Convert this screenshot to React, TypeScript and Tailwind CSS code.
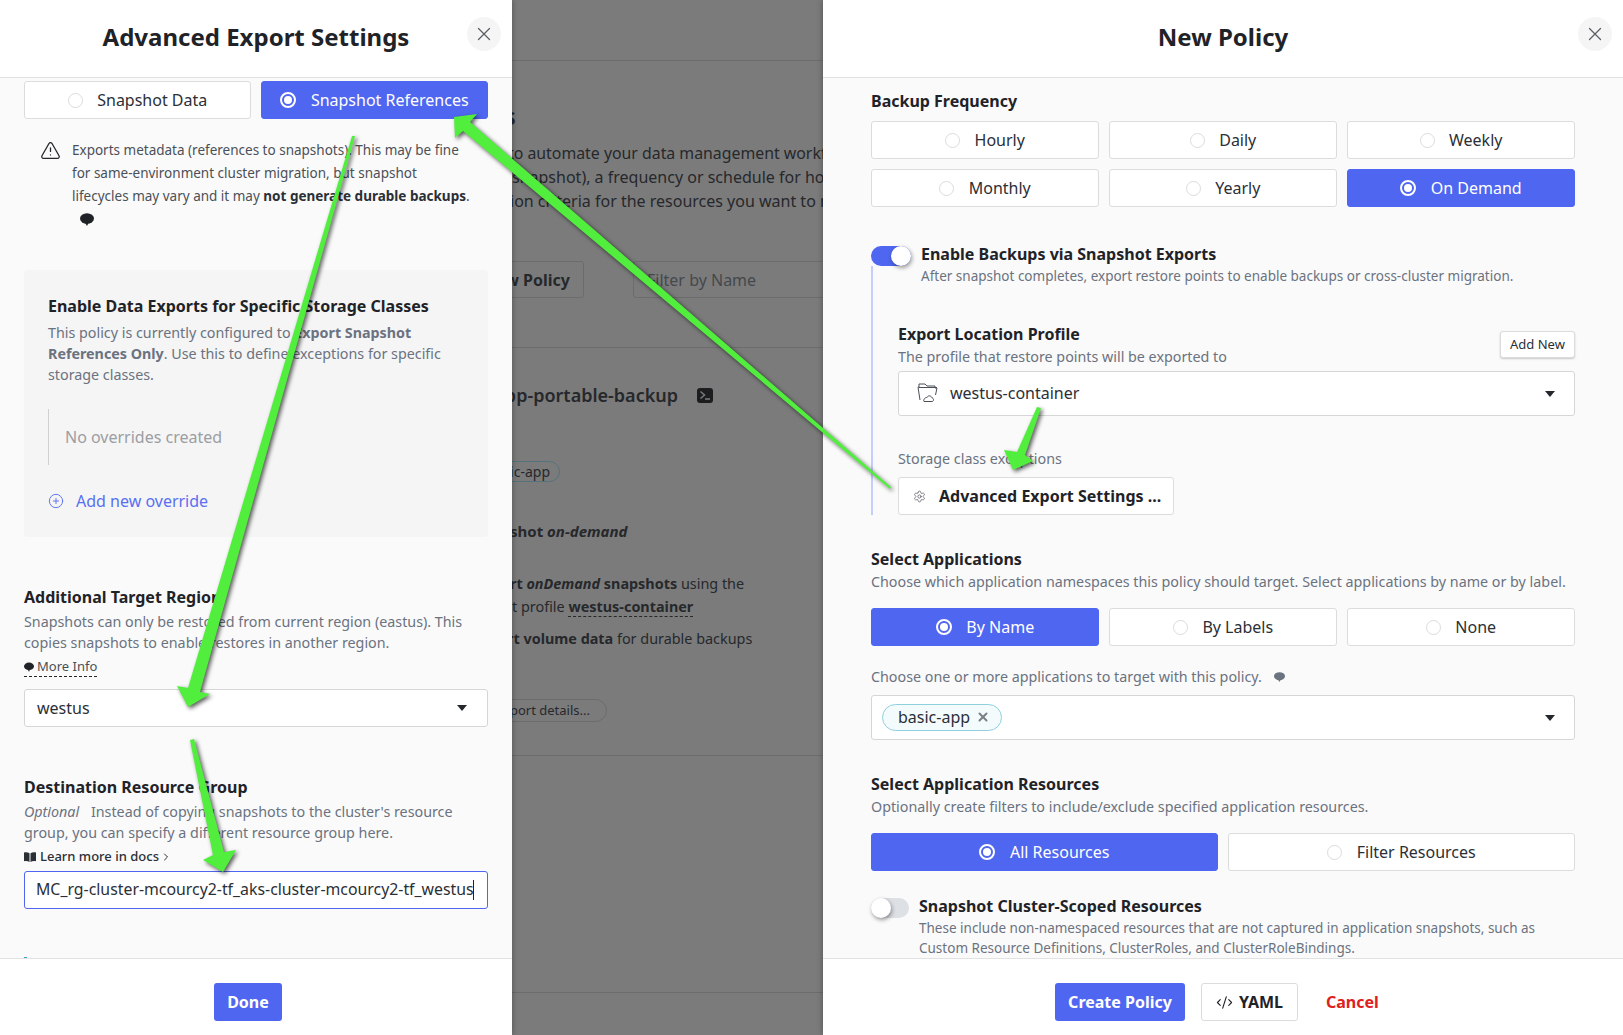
import { ChevronRight, CirclePlus, CodeXml, Settings, TriangleAlert, X } from 'lucide-react';

const Radio = ({ label, active }: { label: string; active?: boolean }) => (
  <div
    className={
      active
        ? 'flex h-[38px] items-center justify-center gap-[14.5px] rounded-[3px] border border-[#4f66f0] bg-[#4f66f0] text-[16px] text-white'
        : 'flex h-[38px] items-center justify-center gap-[14.5px] rounded-[3px] border border-[#dcdcdc] bg-white text-[16px] text-[#2b2f36]'
    }
  >
    {active ? (
      <span className="flex h-4 w-4 items-center justify-center rounded-full border-2 border-white bg-[#4f66f0]">
        <span className="h-2 w-2 rounded-full bg-white" />
      </span>
    ) : (
      <span className="h-[15px] w-[15px] rounded-full border border-[#dcdcdc] bg-white" />
    )}
    <span>{label}</span>
  </div>
);

const Bubble = ({ className }: { className: string }) => (
  <svg viewBox="0 0 14 13" className={className} fill="currentColor">
    <ellipse cx="7" cy="5.5" rx="7" ry="5.2" />
    <path d="M4.5 9 L7 13 L9 9 Z" />
  </svg>
);

const Caret = () => (
  <svg viewBox="0 0 10 6" className="h-[6px] w-[10px]" fill="#24272c">
    <path d="M0 0 H10 L5 6 Z" />
  </svg>
);

const CloseButton = () => (
  <div className="flex h-[34px] w-[34px] items-center justify-center justify-self-end rounded-full bg-[#f5f5f5] text-[#5b6068]">
    <X size={22} strokeWidth={1.4} />
  </div>
);

const PanelHeader = ({ title }: { title: string }) => (
  <div className="grid h-[78px] shrink-0 grid-cols-[1fr_auto_1fr] border-b border-[#e2e2e2] bg-white px-[11px] pt-[17px]">
    <div />
    <h1 className="pt-[3px] text-[24px] leading-[34px] font-bold text-[#1f2328]">{title}</h1>
    <CloseButton />
  </div>
);

export default function App() {
  return (
    <div className="relative flex h-[1035px] w-[1623px] overflow-hidden bg-[#7b7b7b] font-['Noto_Sans',sans-serif]">
      {/* Advanced export drawer */}
      <div className="z-10 flex h-full w-[512px] shrink-0 flex-col bg-[#fafafa] shadow-[0_0_6px_rgba(0,0,0,0.35)]">
        <PanelHeader title="Advanced Export Settings" />
        <div className="flex-1 overflow-hidden px-6 pt-[3px]">
          <div className="grid grid-cols-2 gap-[10px]">
            <Radio label="Snapshot Data" />
            <Radio label="Snapshot References" active />
          </div>

          <div className="mt-5 flex pl-4 text-[13.5px] leading-[23px] text-[#4b5058]">
            <TriangleAlert size={21} strokeWidth={1.5} className="mt-px w-[32px] shrink-0 pr-[11px] text-[#24272c]" />
            <div>
              <p className="whitespace-nowrap">Exports metadata (references to snapshots). This may be fine</p>
              <p className="whitespace-nowrap">for same-environment cluster migration, but snapshot</p>
              <p className="whitespace-nowrap">
                lifecycles may vary and it may <b className="font-bold text-[#2b2f36]">not generate durable backups</b>.
              </p>
              <div className="flex h-[23px] items-center pl-2 text-[#1f2328]">
                <Bubble className="h-[13px] w-[14px]" />
              </div>
            </div>
          </div>

          <div className="mt-[39px] h-[267px] rounded-[4px] bg-[#f5f5f5] px-6 pt-6">
            <h2 className="text-[16px] leading-6 font-bold text-[#1f2328]">Enable Data Exports for Specific Storage Classes</h2>
            <p className="mt-1 text-[14.3px] leading-[21px] text-[#6b7280]">
              This policy is currently configured to <b className="font-bold">Export Snapshot References Only</b>. Use this to define exceptions for specific storage classes.
            </p>
            <div className="mt-6 flex h-[56px] items-center border-l border-[#d0d0d0] pl-4 text-[16px] text-[#9b9ea3]">
              No overrides created
            </div>
            <div className="mt-6 flex items-center gap-[12px] text-[16px] leading-6 text-[#5a6ff2]">
              <CirclePlus size={16} strokeWidth={1.4} />
              Add new override
            </div>
          </div>

          <h2 className="mt-[48px] text-[16px] leading-6 font-bold text-[#1f2328]">Additional Target Region</h2>
          <p className="mt-[2px] text-[14.3px] leading-[21px] text-[#6b7280]">
            Snapshots can only be restored from current region (eastus). This copies snapshots to enable restores in another region.
          </p>
          <div className="mt-[4px] flex h-[20px] w-fit items-center gap-[3px] border-b border-dashed border-[#24272c] text-[13px] text-[#4b5058]">
            <Bubble className="h-[10px] w-[10px] text-[#1f2328]" />
            More Info
          </div>
          <div className="mt-[12px] flex h-[38px] items-center justify-between rounded-[3px] border border-[#d6d6d6] bg-white pr-[20px] pl-3 text-[16px] text-[#2b2f36]">
            westus
            <Caret />
          </div>

          <h2 className="mt-[48px] text-[16px] leading-6 font-bold text-[#1f2328]">Destination Resource Group</h2>
          <p className="mt-[2px] text-[14.3px] leading-[21px] text-[#6b7280]">
            <i className="pr-2">Optional</i> Instead of copying snapshots to the cluster's resource group, you can specify a different resource group here.
          </p>
          <div className="mt-1 flex h-[20px] items-center gap-[4px] text-[13px] font-medium text-[#2b2f36]">
            <svg viewBox="0 0 12 10" className="h-[10px] w-[12px]" fill="#2b2f36">
              <path d="M0 0.5 C2 0 4 0.3 5.5 1.2 V10 C4 9 2 8.8 0 9.2 Z M12 0.5 C10 0 8 0.3 6.5 1.2 V10 C8 9 10 8.8 12 9.2 Z" />
            </svg>
            Learn more in docs
            <ChevronRight size={12} className="-ml-[3px]" />
          </div>
          <div className="mt-[4px] flex h-[38px] items-center rounded-[3px] border border-[#4f66f0] bg-white pl-[11px] text-[15.85px] whitespace-nowrap text-[#2b2f36]">
            MC_rg-cluster-mcourcy2-tf_aks-cluster-mcourcy2-tf_westus
            <span className="-ml-px h-5 w-px bg-[#1f2328]" />
          </div>
          <div className="mt-[48px] h-px w-[3px] bg-[#3fa7c4]" />
        </div>
        <div className="flex h-[77px] shrink-0 justify-center border-t border-[#e2e2e2] bg-white pt-[24px] pr-[16px]">
          <div className="flex h-[38px] w-[68px] items-center justify-center rounded-[3px] bg-[#4f66f0] text-[16px] font-bold text-white">Done</div>
        </div>
      </div>

      {/* Dimmed page behind the drawers */}
      <div className="h-full min-w-0 flex-1 overflow-hidden text-[16px] whitespace-nowrap text-[#26282b]">
        <div className="h-[61px] border-b border-[#6c6c6c]" />
        <div className="mt-[39px] -ml-[8px] text-[24px] leading-8 font-semibold">s</div>
        <div className="mt-[9px] leading-6">
          <p className="-ml-[4px] text-[15.85px]">to automate your data management workflows</p>
          <p>snapshot), a frequency or schedule for how often</p>
          <p className="-ml-[2px]">ion criteria for the resources you want to manage</p>
        </div>
        <div className="mt-[48px] flex h-[37px] gap-[49px]">
          <div className="-ml-[60px] flex w-[132px] shrink-0 items-center justify-end rounded-[3px] border border-[#6c6c6c] pr-[13px] font-bold">New Policy</div>
          <div className="flex w-[300px] shrink-0 items-center rounded-[3px] border border-[#6c6c6c] pl-[13px] text-[#45484c]">Filter by Name</div>
        </div>
        <div className="mt-[49px] border-t border-[#6c6c6c]" />
        <div className="mt-[33px] flex items-center gap-[19px] leading-7">
          <span className="-ml-[100px] w-[266px] text-right text-[18px] font-semibold">basic-app-portable-backup</span>
          <svg viewBox="0 0 16 15" className="h-[15px] w-[16px]">
            <rect width="16" height="15" rx="3" fill="#1c1d1f" />
            <path d="M3.5 3.5 L7.5 7 L3.5 10.5" stroke="#7b7b7b" strokeWidth="1.5" fill="none" />
            <path d="M8 11 H13" stroke="#7b7b7b" strokeWidth="1.5" />
          </svg>
        </div>
        <div className="mt-[52px] -ml-[40px] flex h-[21px] w-[88px] items-center justify-end rounded-full border border-[#55727c] pr-[9px] text-[14px]">basic-app</div>
        <div className="mt-[37px] leading-6 font-bold">
          <span className="-ml-[2px] text-[15px]">shot <i>on-demand</i></span>
        </div>
        <div className="mt-[29px] text-[14.4px] leading-[23px]">
          <p className="-ml-[2px]">
            <b className="font-bold">
              rt <i>onDemand</i> snapshots
            </b>{' '}
            using the
          </p>
          <p>
            t profile <b className="border-b border-dashed border-[#26282b] font-bold">westus-container</b>
          </p>
          <p className="mt-[9px] -ml-[5px]">
            <b className="font-bold">rt volume data</b> for durable backups
          </p>
        </div>
        <div className="mt-[49px] -ml-[60px] flex h-[23px] w-[155px] items-center justify-end rounded-full border border-[#6c6c6c] pr-[16px] text-[13px]">export details...</div>
        <div className="mt-[33px] border-t border-[#6c6c6c]" />
        <div className="mt-[236px] border-t border-[#6c6c6c]" />
      </div>

      {/* New policy drawer */}
      <div className="z-10 flex h-full w-[800px] shrink-0 flex-col bg-[#fafafa] shadow-[0_0_6px_rgba(0,0,0,0.35)]">
        <PanelHeader title="New Policy" />
        <div className="flex-1 overflow-hidden px-12 pt-[11px]">
          <h2 className="text-[16px] leading-6 font-bold text-[#1f2328]">Backup Frequency</h2>
          <div className="mt-2 grid grid-cols-3 gap-[10px]">
            <Radio label="Hourly" />
            <Radio label="Daily" />
            <Radio label="Weekly" />
            <Radio label="Monthly" />
            <Radio label="Yearly" />
            <Radio label="On Demand" active />
          </div>

          <div className="mt-[35px] flex h-6 gap-[10px]">
            <div className="mt-1 flex h-5 w-10 justify-end rounded-full bg-[#4f66f0]">
              <span className="h-5 w-5 rounded-full bg-white shadow-[1px_2px_4px_rgba(0,0,0,0.4)]" />
            </div>
            <h2 className="text-[16px] leading-6 font-bold text-[#1f2328]">Enable Backups via Snapshot Exports</h2>
          </div>
          <div className="h-[249px] border-l-2 border-[#c4cdfb] pl-[25px]">
            <p className="ml-[23px] text-[13.5px] leading-5 text-[#6b7280]">After snapshot completes, export restore points to enable backups or cross-cluster migration.</p>
            <div className="mt-9 flex items-center justify-between">
              <div>
                <h3 className="text-[16px] leading-6 font-bold text-[#1f2328]">Export Location Profile</h3>
                <p className="mt-px text-[14.3px] leading-5 text-[#6b7280]">The profile that restore points will be exported to</p>
              </div>
              <div className="flex h-[27px] w-[75px] items-center justify-center rounded-[3px] border border-[#dcdcdc] bg-white text-[13px] text-[#2b2f36] shadow-[0_1px_2px_rgba(0,0,0,0.2)]">Add New</div>
            </div>
            <div className="mt-1 flex h-[45px] items-center justify-between rounded-[3px] border border-[#d6d6d6] bg-white pr-[19px] pl-[18px] text-[16px] text-[#2b2f36]">
              <span className="flex items-center gap-[12px] pb-[2px]">
                <svg viewBox="0 0 21 21" className="h-[21px] w-[21px]" fill="none" stroke="#4b5058" strokeWidth="1">
                  <path d="M3 18 L1 5 H2 V2 H8 L10 4 H18 V6 H20 L18.5 13" />
                  <path d="M2 5.5 H20" />
                  <path d="M7 19.5 H15 C17 19.5 17 16 15 16 C14.5 13.5 11 13 10 15.5 C7.5 15 6 19 7 19.5 Z" />
                </svg>
                westus-container
              </span>
              <Caret />
            </div>
            <p className="mt-[33px] text-[14.3px] leading-5 text-[#6b7280]">Storage class exceptions</p>
            <div className="mt-2 flex h-[38px] w-[276px] items-center gap-[13px] rounded-[3px] border border-[#dcdcdc] bg-white pl-[14px] text-[16px] font-bold text-[#1f2328]">
              <Settings size={13} strokeWidth={1.3} className="text-[#4b5058]" />
              Advanced Export Settings ...
            </div>
          </div>

          <h2 className="mt-8 text-[16px] leading-6 font-bold text-[#1f2328]">Select Applications</h2>
          <p className="mt-px text-[14.3px] leading-5 text-[#6b7280]">Choose which application namespaces this policy should target. Select applications by name or by label.</p>
          <div className="mt-4 grid grid-cols-3 gap-[10px]">
            <Radio label="By Name" active />
            <Radio label="By Labels" />
            <Radio label="None" />
          </div>
          <div className="mt-[21px] flex h-5 items-center gap-[12px] text-[14.3px] text-[#6b7280]">
            Choose one or more applications to target with this policy.
            <Bubble className="h-[12px] w-[11px]" />
          </div>
          <div className="mt-2 flex h-[45px] items-center justify-between rounded-[3px] border border-[#d6d6d6] bg-white pr-[19px] pl-[10px]">
            <span className="flex h-[27px] w-[120px] items-center gap-[6px] rounded-full border border-[#8ed0dd] bg-[#f4fbfc] pb-px pl-[15px] text-[16px] text-[#2b2f36]">
              basic-app
              <X size={14} strokeWidth={3.5} className="text-[#7d8187]" />
            </span>
            <Caret />
          </div>

          <h2 className="mt-8 text-[16px] leading-6 font-bold text-[#1f2328]">Select Application Resources</h2>
          <p className="mt-px text-[14.3px] leading-5 text-[#6b7280]">Optionally create filters to include/exclude specified application resources.</p>
          <div className="mt-4 grid grid-cols-2 gap-[10px]">
            <Radio label="All Resources" active />
            <Radio label="Filter Resources" />
          </div>
          <div className="mt-[23px] flex gap-[10px]">
            <div className="mt-1 h-5 w-[38px] shrink-0 rounded-full bg-[#dde0e5]">
              <span className="block h-5 w-5 rounded-full bg-white shadow-[1px_2px_4px_rgba(0,0,0,0.4)]" />
            </div>
            <div>
              <h2 className="text-[16px] leading-6 font-bold text-[#1f2328]">Snapshot Cluster-Scoped Resources</h2>
              <p className="text-[13.5px] leading-5 text-[#6b7280]">
                These include non-namespaced resources that are not captured in application snapshots, such as Custom Resource Definitions, ClusterRoles, and ClusterRoleBindings.
              </p>
            </div>
          </div>
        </div>
        <div className="flex h-[77px] shrink-0 items-start border-t border-[#e2e2e2] bg-white pt-[24px] pl-[232px] text-[16px] font-bold">
          <div className="flex h-[38px] w-[130px] items-center justify-center rounded-[3px] bg-[#4f66f0] text-white">Create Policy</div>
          <div className="ml-4 flex h-[38px] w-[97px] items-center justify-center gap-[6px] rounded-[3px] border border-[#dcdcdc] text-[#1f2328]">
            <CodeXml size={17} strokeWidth={1.6} />
            YAML
          </div>
          <div className="ml-7 flex h-[38px] items-center text-[#e02020]">Cancel</div>
        </div>
      </div>

      {/* Green annotation arrows drawn over the screenshot */}
      <svg viewBox="0 0 1623 1035" className="pointer-events-none absolute inset-0 z-20 h-[1035px] w-[1623px] drop-shadow-[2px_2px_2px_rgba(0,0,0,0.65)]" fill="#52ee3e">
        <polygon points="454,117 477,114 470,122 891,487 890,489 463,131 455,138" />
        <polygon points="355,136 200,692 210,694 188,707 177,686 188,688 352,136" />
        <polygon points="1037,407 1041,408 1025,455 1033,461 1013,470 1004,450 1017,452" />
        <polygon points="190,740 194,739 224,852 236,850 223,872 203,860 213,855" />
      </svg>
    </div>
  );
}
